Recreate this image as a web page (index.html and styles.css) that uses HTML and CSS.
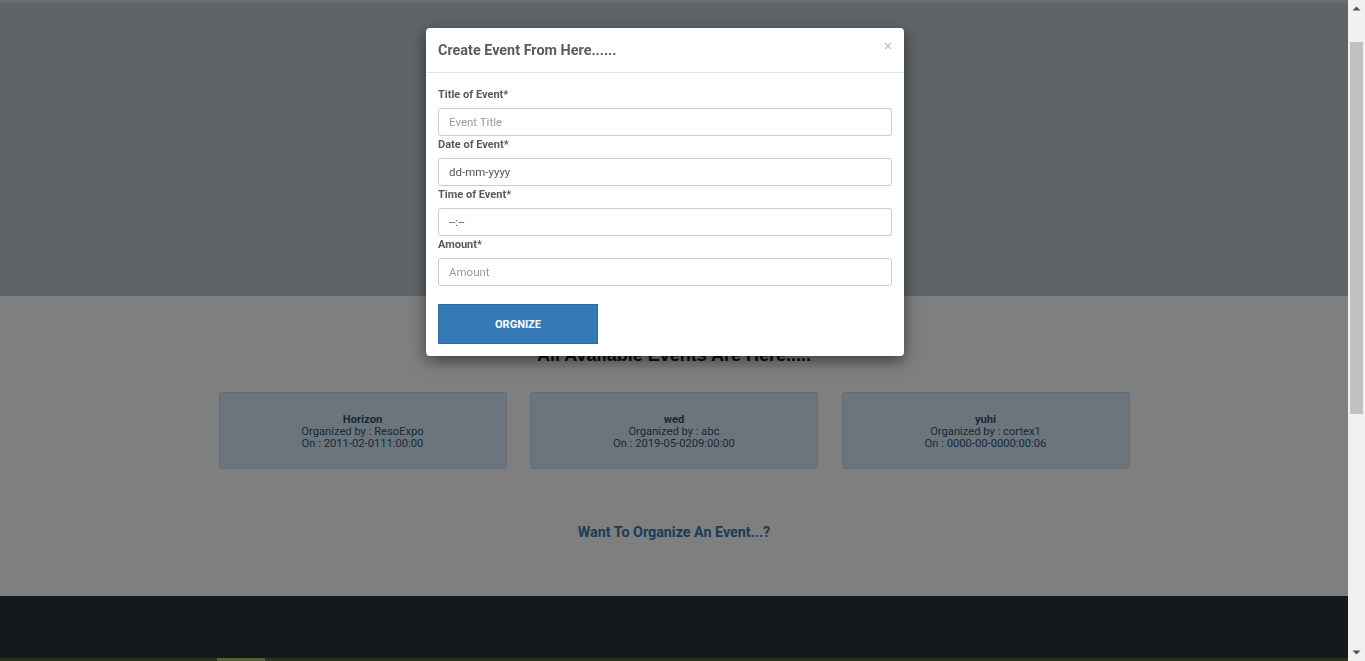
FILE: index.html
```html
<!DOCTYPE html>
<html lang="en">
<head>
<meta charset="utf-8">
<title>Events</title>
<link rel="stylesheet" href="styles.css">
</head>
<body>
<div class="viewport">
  <div class="page">
    <header class="hero"></header>
    <section class="events">
      <h2 class="events-title">All Available Events Are Here.....</h2>
      <div class="cards">
        <div class="card">
          <div class="card-name">Horizon</div>
          <div>Organized by : ResoExpo</div>
          <div>On : 2011-02-0111:00:00</div>
        </div>
        <div class="card">
          <div class="card-name">wed</div>
          <div>Organized by : abc</div>
          <div>On : 2019-05-0209:00:00</div>
        </div>
        <div class="card">
          <div class="card-name">yuhi</div>
          <div>Organized by : cortex1</div>
          <div>On : 0000-00-0000:00:06</div>
        </div>
      </div>
      <a class="organize-link" href="#">Want To Organize An Event...?</a>
    </section>
    <footer class="footer">
      <div class="footer-strip"><span class="strip-hi"></span></div>
    </footer>
    <div class="backdrop"></div>
  </div>
  <div class="scrollbar">
    <div class="sb-arrow">
      <svg width="9" height="5" viewBox="0 0 9 5"><path d="M0.5 4.5 L4.5 0.5 L8.5 4.5 Z" fill="#505050"/></svg>
    </div>
    <div class="sb-track"><div class="sb-thumb"></div></div>
    <div class="sb-arrow">
      <svg width="9" height="5" viewBox="0 0 9 5"><path d="M0.5 0.5 L4.5 4.5 L8.5 0.5 Z" fill="#505050"/></svg>
    </div>
  </div>
</div>

<div class="modal">
  <div class="modal-header">
    <h4 class="modal-title">Create Event From Here......</h4>
    <span class="close">&times;</span>
  </div>
  <form class="modal-body">
    <label class="lbl">Title of Event*</label>
    <input class="field" type="text" placeholder="Event Title">
    <label class="lbl">Date of Event*</label>
    <div class="field fake">dd-mm-yyyy</div>
    <label class="lbl">Time of Event*</label>
    <div class="field fake">--:--</div>
    <label class="lbl">Amount*</label>
    <input class="field" type="text" placeholder="Amount">
    <button class="btn" type="button">ORGNIZE</button>
  </form>
</div>
</body>
</html>
```

FILE: styles.css
```css
* { box-sizing: border-box; }
html, body { margin: 0; padding: 0; overflow: hidden; }
body {
  font-family: Roboto, "Liberation Sans", Arial, sans-serif;
  color: #333;
  background: #fff;
}
.viewport {
  display: flex;
  height: 661px;
}
.page {
  position: relative;
  flex: 1;
  height: 661px;
  overflow: hidden;
  display: flex;
  flex-direction: column;
}
.hero {
  height: 296px;
  flex: none;
  background: #bec8d0;
  border-top: 3px solid #d6dadd;
}
.events {
  height: 300px;
  flex: none;
  padding-top: 47px;
  display: flex;
  flex-direction: column;
  align-items: center;
}
.events-title {
  margin: 0;
  font-size: 18px;
  line-height: 24px;
  font-weight: 700;
  color: #1c1c1c;
  font-family: "Liberation Sans", Arial, sans-serif;
}
.cards {
  margin-top: 25px;
  display: flex;
  gap: 23.5px;
}
.card {
  width: 288px;
  height: 77px;
  background: #d8eaf8;
  border: 1px solid #c4dbee;
  border-radius: 3px;
  color: #2f5573;
  font-size: 11.2px;
  line-height: 12px;
  text-align: center;
  display: flex;
  flex-direction: column;
  justify-content: center;
  padding-top: 2px;
}
.card-name { font-weight: 700; }
.organize-link {
  margin-top: 55px;
  color: #337ab7;
  font-weight: 700;
  font-size: 14.3px;
  text-decoration: none;
}
.footer {
  flex: 1;
  background: #283436;
  display: flex;
  flex-direction: column;
  justify-content: flex-end;
}
.footer-strip {
  height: 3px;
  background: #56662a;
  padding-left: 217px;
}
.strip-hi {
  display: block;
  width: 48px;
  height: 3px;
  background: #a6c45c;
}
.backdrop {
  position: absolute;
  inset: 0;
  background: rgba(0, 0, 0, 0.5);
}
.scrollbar {
  width: 17px;
  flex: none;
  background: #f1f1f1;
  display: flex;
  flex-direction: column;
}
.sb-arrow {
  height: 17px;
  display: flex;
  align-items: center;
  justify-content: center;
}
.sb-track {
  flex: 1;
  padding: 25px 2px 0;
}
.sb-thumb {
  height: 372px;
  background: #c1c1c1;
}
.modal {
  position: fixed;
  top: 28px;
  left: 426px;
  width: 478px;
  background: #fff;
  border-radius: 4px;
  box-shadow: 0 5px 15px rgba(0, 0, 0, 0.5);
}
.modal-header {
  height: 45px;
  padding: 0 12px;
  border-bottom: 1px solid #e5e5e5;
  display: flex;
  align-items: center;
  justify-content: space-between;
}
.modal-title {
  margin: 0;
  font-size: 14.4px;
  font-weight: 700;
  color: #575c62;
}
.close {
  align-self: flex-start;
  margin-top: 10px;
  margin-right: 0;
  font-size: 15px;
  line-height: 16px;
  color: #c4c4c4;
}
.modal-body {
  padding: 13px 12px 12px;
  display: flex;
  flex-direction: column;
  align-items: flex-start;
}
.lbl {
  font-size: 11px;
  font-weight: 700;
  line-height: 17px;
  color: #555b61;
  margin-bottom: 5px;
}
.field {
  width: 100%;
  height: 28px;
  padding: 0 10px;
  border: 1px solid #cbcbcb;
  border-radius: 3px;
  font-family: inherit;
  font-size: 11.5px;
  color: #555;
  display: flex;
  align-items: center;
  outline: none;
}
.field::placeholder { color: #9a9a9a; }
.btn {
  margin-top: 18px;
  width: 160px;
  height: 40px;
  background: #337ab7;
  border: 1px solid #2e6da4;
  border-radius: 0;
  color: #fff;
  font-family: inherit;
  font-size: 11px;
  font-weight: 700;
}
```
